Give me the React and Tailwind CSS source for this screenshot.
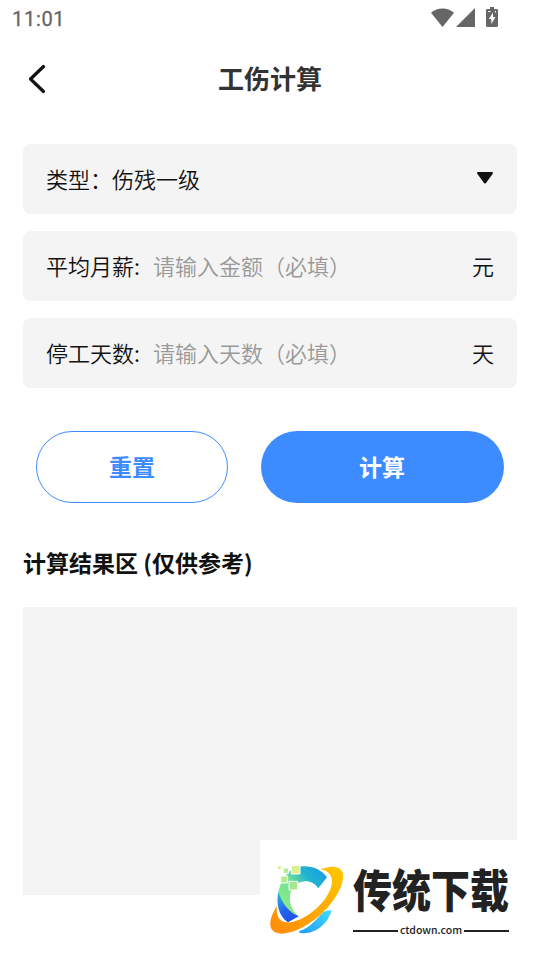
const fields = [
    { label: '平均月薪:', placeholder: '请输入金额（必填）', unit: '元' },
    { label: '停工天数:', placeholder: '请输入天数（必填）', unit: '天' },
];

function StatusBar() {
    return (
        <div className="flex h-9 items-center justify-between pl-3 pr-[42px] text-[#666666]">
            <span className="font-['Roboto',sans-serif] text-[20px] leading-none tracking-[0.7px] pt-[2px] [-webkit-text-stroke:0.3px_#666666]">11:01</span>
            <div className="-mt-px flex items-start">
                <svg className="h-[19px] w-[23px]" viewBox="0 0 23 19" fill="currentColor">
                    <path d="M0 4.8C6.4-1.1 16.6-1.1 23 4.8L11.5 19z" />
                </svg>
                <svg className="ml-[2px] h-[19px] w-[19px]" viewBox="0 0 19 19" fill="currentColor">
                    <path d="M19 0v19H0z" />
                </svg>
                <svg className="-mt-px ml-[11px] h-5 w-3" viewBox="0 0 12 20">
                    <path fill="currentColor" d="M4 0h4v2h2.7Q12 2 12 3.3v15.2q0 1.5-1.5 1.5h-9Q0 20 0 18.500V3.300Q0 2 1.300 2H4z" />
                    <path fill="#fff" d="M7 5.500 2.800 12h2.500v5L9.500 10H7zM2 4h2.500v1H2zM9 4h1v1.500H9z" />
                </svg>
            </div>
        </div>
    );
}

function Watermark() {
    return (
        <div className="absolute bottom-0 right-0 flex h-[120px] w-[280px] bg-white pl-[10px] pt-[23px]">
            <svg className="h-[75px] w-[76px] shrink-0" viewBox="45 84 228 225">
                <defs>
                    <linearGradient id="arc" x1="0" y1="1" x2="1" y2="0">
                        <stop offset=".2" stopColor="#8ceb83" />
                        <stop offset=".5" stopColor="#6ee09a" />
                        <stop offset=".7" stopColor="#22b4d0" />
                        <stop offset="1" stopColor="#149be5" />
                    </linearGradient>
                    <linearGradient id="deep" x1="0" y1="0" x2=".6" y2="1">
                        <stop offset="0" stopColor="#26bde0" />
                        <stop offset=".6" stopColor="#2464ed" />
                        <stop offset="1" stopColor="#2450e4" />
                    </linearGradient>
                    <linearGradient id="tail" x1="0" y1="1" x2="1" y2="0">
                        <stop offset="0" stopColor="#239df5" />
                        <stop offset="1" stopColor="#41dcff" />
                    </linearGradient>
                    <linearGradient id="ring" x1="0" y1="1" x2="1" y2="0">
                        <stop offset="0" stopColor="#ff8a0c" />
                        <stop offset="1" stopColor="#ffc800" />
                    </linearGradient>
                </defs>
                <path fill="url(#arc)" d="M125 96C160 88 197 99 216 127L190 160C175 136 145 132 123 148C97 167 98 218 131 244L99 261C65 237 59 173 84 135Q99 106 125 96z" />
                <path fill="url(#deep)" d="M70 170C80 203 100 230 131 244L99 262C70 243 63 204 70 170z" />
                <path fill="url(#tail)" d="M133 288C168 278 185 250 205 231Q216 225 230 226C219 269 174 303 133 293z" />
                <path fill="url(#ring)" d="M197 103C228 91 259 92 264 117C269 154 231 214 180 253C132 291 68 311 50 283C40 266 49 239 66 212C62 243 72 261 96 262C135 265 200 219 222 172C241 133 228 109 197 103z" />
                <g stroke="#fff" strokeWidth="3">
                    <path fill="#ddef91" d="M109 91h26v26h-26zM67 92h12v12H67z" />
                    <path fill="#b4eb91" d="M85 99h16v16H85zM77 123h21v21H77z" />
                    <path fill="#a5e78a" d="M102 139h26v26h-26z" />
                </g>
            </svg>
            <div className="ml-[7px] w-[156px] text-[#222222]">
                <div className="mb-[22px] h-10 origin-top scale-y-[1.16] whitespace-nowrap font-['Noto_Sans_CJK_SC',sans-serif] text-[39px] font-black leading-[44px]">传统下载</div>
                <div className="flex items-center gap-[2px]">
                    <span className="h-[2px] flex-1 bg-[#222222]" />
                    <span className="relative -top-px font-['Noto_Sans_CJK_SC',sans-serif] text-[10.5px] font-medium leading-[11px]">ctdown.com</span>
                    <span className="h-[2px] flex-1 bg-[#222222]" />
                </div>
            </div>
        </div>
    );
}

export default function App() {
    return (
        <div lang="zh-CN" className="relative h-[960px] w-[540px] overflow-hidden bg-white font-['Noto_Sans_CJK_SC',sans-serif] text-[#111111]">
            <StatusBar />
            <header className="grid h-[86px] grid-cols-[80px_1fr_80px] items-center">
                <button className="pl-7">
                    <svg className="h-[30px] w-[18px]" viewBox="0 0 18 30" fill="none" stroke="#111" strokeWidth="3.2" strokeLinecap="round" strokeLinejoin="round">
                        <path d="M15.500 2.500 2.500 15l13 12.500" />
                    </svg>
                </button>
                <h1 className="pb-[2px] text-center text-[26px] font-bold leading-none text-[#333333]">工伤计算</h1>
            </header>

            <main className="px-[23px] pt-[22px]">
                <div className="flex flex-col gap-[17px] text-[22px] font-[350]">
                    <div className="flex h-[70px] items-center justify-between rounded-lg bg-[#f4f4f4] px-[23px] pb-[2px]">
                        <span>类型：伤残一级</span>
                        <svg className="mr-px h-3 w-4" viewBox="0 0 16 12" fill="#111">
                            <path d="M1 0h14q1.500.4.7 1.700L9 11q-1 1-2 0L.3 1.700Q-.5.4 1 0z" />
                        </svg>
                    </div>
                    {fields.map((field) => (
                        <div key={field.label} className="flex h-[70px] items-center rounded-lg bg-[#f4f4f4] px-[23px] pb-[2px]">
                            <span className="w-[107px]">{field.label}</span>
                            <input
                                className="h-10 min-w-0 flex-1 bg-transparent outline-none placeholder:text-[#999999]"
                                placeholder={field.placeholder}
                            />
                            <span>{field.unit}</span>
                        </div>
                    ))}
                </div>

                <div className="mt-[43px] flex gap-[33px] px-[13px] text-[23px] font-bold">
                    <button className="h-[72px] w-[192px] rounded-full border border-[#3c8cff] pb-[2px] text-[#3c8cff]">重置</button>
                    <button className="h-[72px] flex-1 rounded-full bg-[#3c8cff] pb-[2px] pr-px text-white">计算</button>
                </div>

                <h2 className="mt-[42px] text-[23px] font-bold leading-[34px]">计算结果区 (仅供参考)</h2>
                <div className="mt-[28px] h-[288px] bg-[#f4f4f4]" />
            </main>
            <Watermark />
        </div>
    );
}
